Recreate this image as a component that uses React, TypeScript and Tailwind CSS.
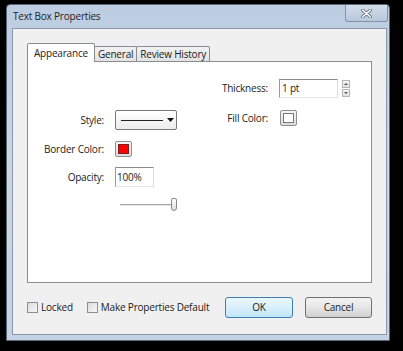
export default function App() {
  return (
    <div
      className="w-[403px] h-[351px] bg-black pl-[6px] pt-[4px] text-[#1b1b1b]"
      style={{ fontFamily: '"Open Sans", "Noto Sans", sans-serif' }}
    >
      {/* Window */}
      <div className="w-[384px] h-[337px] flex flex-col border border-[#5d6877] rounded-t-[4px] bg-gradient-to-b from-[#bccde2] via-[#c9d7e8] to-[#c3d2e5]">
        {/* Title bar */}
        <div className="h-[23px] flex items-start justify-between">
          <span className="pl-[6px] pt-[5px] text-[10px] leading-[13px] tracking-[-0.2px] text-[#1e1e1e]">Text Box Properties</span>
          <div className="w-[43px] h-[17px] mr-[1px] border border-t-0 border-[#8392a6] rounded-b-[3px] bg-gradient-to-b from-[#d2dcea] to-[#b9c8dc] flex items-center justify-center">
            <svg width="11" height="9" viewBox="0 0 11 9">
              <path d="M1.5 1 L9.5 8 M9.5 1 L1.5 8" stroke="#5f6b7a" strokeWidth="3" strokeLinecap="round" />
              <path d="M1.5 1 L9.5 8 M9.5 1 L1.5 8" stroke="#ffffff" strokeWidth="1.6" strokeLinecap="round" />
            </svg>
          </div>
        </div>

        {/* Client area */}
        <div className="ml-[5px] w-[375px] h-[307px] border border-[#8a97a8] bg-[#f0f0f0] flex flex-col text-[10px] tracking-[-0.2px] whitespace-nowrap">
          {/* Tabs */}
          <div className="mt-[14px] ml-[14px] flex items-end h-[18px]">
            <div className="relative z-10 -mb-px h-[19px] px-[6px] flex items-center border border-b-0 border-[#898c95] bg-white rounded-t-[2px]">
              Appearance
            </div>
            <div className="-ml-px h-[15px] px-[3px] flex items-center border border-b-0 border-[#898c95] bg-gradient-to-b from-[#f2f2f2] to-[#e3e3e3] rounded-t-[2px]">
              General
            </div>
            <div className="-ml-px h-[15px] px-[3px] flex items-center border border-b-0 border-[#898c95] bg-gradient-to-b from-[#f2f2f2] to-[#e3e3e3] rounded-t-[2px]">
              Review History
            </div>
          </div>

          {/* Panel */}
          <div className="ml-[14px] w-[345px] h-[222px] border border-[#898c95] bg-white flex">
            {/* Left column */}
            <div className="flex flex-col w-[149px]">
              <div className="mt-[48px] h-[20px] flex items-center">
                <span className="w-[76px] text-right">Style:</span>
                <div className="ml-[11px] w-[62px] h-[20px] border border-[#777] rounded-[2px] bg-gradient-to-b from-white to-[#ececec] flex items-center">
                  <div className="ml-[5px] w-[42px] h-px bg-[#222]" />
                  <svg className="ml-[4px]" width="7" height="4" viewBox="0 0 7 4">
                    <path d="M0 0 H7 L3.5 4 Z" fill="#111" />
                  </svg>
                </div>
              </div>
              <div className="mt-[11px] h-[16px] flex items-center">
                <span className="w-[76px] text-right">Border Color:</span>
                <div className="ml-[11px] w-[17px] h-[16px] border border-[#8e8f8f] rounded-[2px] bg-gradient-to-b from-[#f6f6f6] to-[#dcdcdc] flex items-center justify-center">
                  <div className="w-[11px] h-[10px] bg-[#ff0000] border border-[#7a2020]" />
                </div>
              </div>
              <div className="mt-[10px] h-[20px] flex items-center">
                <span className="w-[76px] text-right">Opacity:</span>
                <div className="ml-[11px] w-[39px] h-[20px] border border-t-[#8a8a8a] border-l-[#9a9a9a] border-r-[#dcdcdc] border-b-[#e4e4e4] pl-[1px] flex items-center">
                  100%
                </div>
              </div>
              <div className="mt-[11px] h-[13px] ml-[92px] flex items-center">
                <div className="w-[69px] h-[2px] border-t border-[#a8a8a8] border-b border-b-[#e6e6e6]" />
                <div className="-ml-[2px] w-[7px] h-[13px] border border-[#8a8a8a] rounded-[2px] rounded-b-[3px] bg-gradient-to-b from-white to-[#dedede]" />
              </div>
            </div>

            {/* Right column */}
            <div className="ml-[31px] flex flex-col">
              <div className="mt-[17px] h-[19px] flex items-center">
                <span className="w-[60px] text-right">Thickness:</span>
                <div className="ml-[11px] w-[59px] h-[19px] border border-t-[#8a8a8a] border-l-[#9a9a9a] border-r-[#dcdcdc] border-b-[#e4e4e4] pl-[2px] flex items-center">
                  1 pt
                </div>
                <div className="ml-[4px] w-[8px] h-[17px] flex flex-col gap-px">
                  <div className="h-[8px] border border-[#b5b5b5] bg-gradient-to-b from-[#f7f7f7] to-[#e0e0e0] flex items-center justify-center">
                    <svg width="4" height="2" viewBox="0 0 4 2">
                      <path d="M0 2 H4 L2 0 Z" fill="#555" />
                    </svg>
                  </div>
                  <div className="h-[8px] border border-[#b5b5b5] bg-gradient-to-b from-[#f7f7f7] to-[#e0e0e0] flex items-center justify-center">
                    <svg width="4" height="2" viewBox="0 0 4 2">
                      <path d="M0 0 H4 L2 2 Z" fill="#555" />
                    </svg>
                  </div>
                </div>
              </div>
              <div className="mt-[12px] h-[16px] flex items-center">
                <span className="w-[60px] text-right">Fill Color:</span>
                <div className="ml-[12px] w-[17px] h-[16px] border border-[#8e8f8f] rounded-[2px] bg-gradient-to-b from-[#f6f6f6] to-[#dcdcdc] flex items-center justify-center">
                  <div className="w-[11px] h-[10px] bg-white border border-[#777]" />
                </div>
              </div>
            </div>
          </div>

          {/* Bottom row */}
          <div className="mt-[14px] ml-[14px] h-[21px] flex items-center">
            <div className="w-[11px] h-[11px] border border-[#8e8f8f] bg-gradient-to-br from-[#dcdcdc] to-[#f8f8f8]" />
            <span className="ml-[3px]">Locked</span>
            <div className="ml-[14px] w-[11px] h-[11px] border border-[#8e8f8f] bg-gradient-to-br from-[#dcdcdc] to-[#f8f8f8]" />
            <span className="ml-[3px]">Make Properties Default</span>
            <div className="ml-auto w-[68px] h-[21px] border border-[#3c7fb1] rounded-[3px] bg-gradient-to-b from-[#eaf6fd] via-[#d9f0fc] to-[#bee6fd] flex items-center justify-center">
              OK
            </div>
            <div className="ml-[12px] mr-[14px] w-[67px] h-[21px] border border-[#707070] rounded-[3px] bg-gradient-to-b from-[#f2f2f2] via-[#e6e6e6] to-[#d0d0d0] flex items-center justify-center">
              Cancel
            </div>
          </div>
        </div>
      </div>
    </div>
  )
}
